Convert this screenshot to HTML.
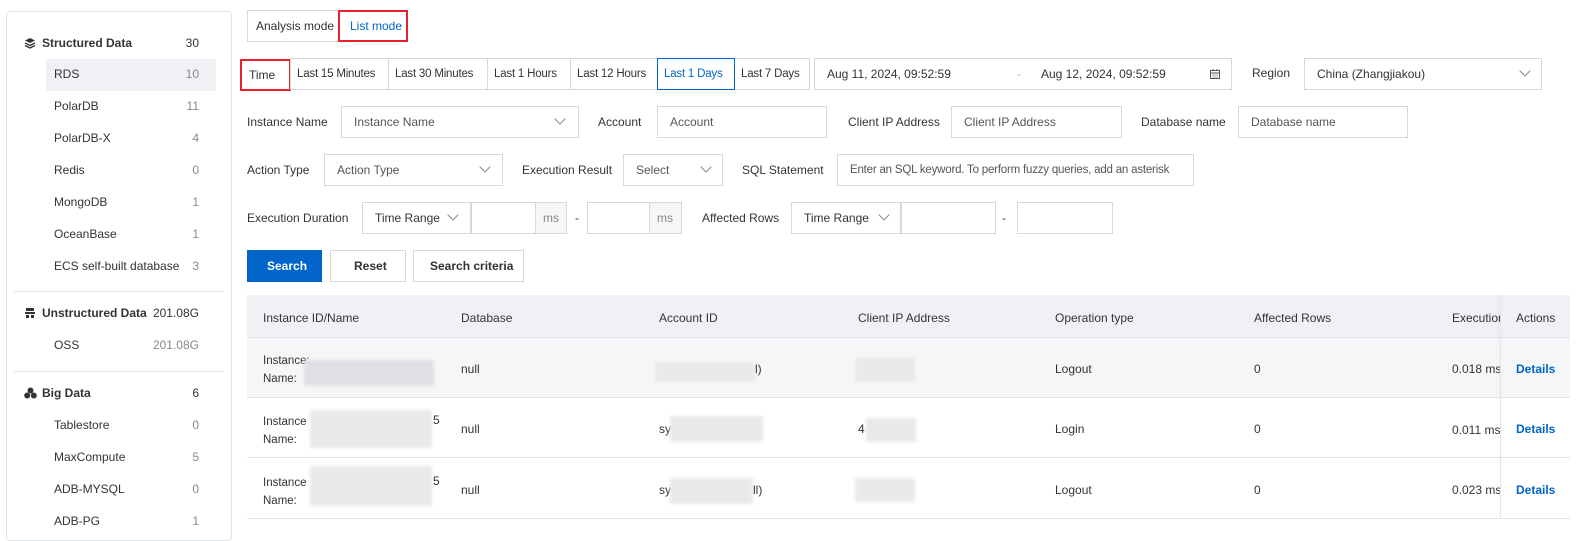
<!DOCTYPE html>
<html><head><meta charset="utf-8"><style>
*{box-sizing:border-box;margin:0;padding:0}
body{width:1582px;height:524px;overflow:hidden;background:#fff;font-family:"Liberation Sans",sans-serif;font-size:12px;color:#333;position:relative}
.a{position:absolute;white-space:nowrap}
.b{position:absolute;border:1px solid #d7d8d9;background:#fff;display:flex;align-items:center;padding-left:12px;white-space:nowrap;color:#333;overflow:hidden}
.t{font-size:11.5px;letter-spacing:-0.2px;padding-left:6px}
.ph{color:#555}
.c{position:absolute;width:8px;height:8px;border-right:1px solid #888;border-bottom:1px solid #888;transform:rotate(45deg)}
.blur{position:absolute;background:#e8e9eb;filter:blur(1.5px)}
.cnt{position:absolute;right:0;color:#888}
</style></head><body>
<!-- sidebar -->
<div class="a" style="left:6px;top:11px;width:226px;height:530px;border:1px solid #dfe3ea;border-radius:4px"></div>
<div class="a" style="left:46px;top:59px;width:170px;height:32px;background:#eff1f5"></div>
<div class="a" style="left:14px;top:291px;width:210px;border-top:1px solid #dfe3ea"></div>
<div class="a" style="left:14px;top:371px;width:210px;border-top:1px solid #dfe3ea"></div>
<svg class="a" style="left:24px;top:37px" width="12" height="12" viewBox="0 0 12 12"><path d="M6 1L11 3.5L6 6L1 3.5Z" fill="#333"/><path d="M1 6L6 8.5L11 6M1 8.5L6 11L11 8.5" stroke="#333" fill="none" stroke-width="1.3"/></svg>
<svg class="a" style="left:24px;top:307px" width="12" height="12" viewBox="0 0 12 12"><path d="M2 1h8v3H2zM1 5h10v2H1zM2 8h3v3H2zM7 8h3v3H7z" fill="#333"/></svg>
<svg class="a" style="left:24px;top:387px" width="13" height="12" viewBox="0 0 13 12"><circle cx="6.5" cy="3.5" r="3" fill="#333"/><circle cx="3.2" cy="8.5" r="3" fill="#333"/><circle cx="9.8" cy="8.5" r="3" fill="#333"/></svg>
<div class="a" style="left:42px;top:36px;width:157px;font-weight:bold">Structured Data<span class="cnt" style="color:#333;font-weight:normal">30</span></div>
<div class="a" style="left:54px;top:67px;width:145px">RDS<span class="cnt">10</span></div>
<div class="a" style="left:54px;top:99px;width:145px">PolarDB<span class="cnt">11</span></div>
<div class="a" style="left:54px;top:131px;width:145px">PolarDB-X<span class="cnt">4</span></div>
<div class="a" style="left:54px;top:163px;width:145px">Redis<span class="cnt">0</span></div>
<div class="a" style="left:54px;top:195px;width:145px">MongoDB<span class="cnt">1</span></div>
<div class="a" style="left:54px;top:227px;width:145px">OceanBase<span class="cnt">1</span></div>
<div class="a" style="left:54px;top:259px;width:145px">ECS self-built database<span class="cnt">3</span></div>
<div class="a" style="left:42px;top:306px;width:157px;font-weight:bold">Unstructured Data<span class="cnt" style="color:#333;font-weight:normal">201.08G</span></div>
<div class="a" style="left:54px;top:338px;width:145px">OSS<span class="cnt">201.08G</span></div>
<div class="a" style="left:42px;top:386px;width:157px;font-weight:bold">Big Data<span class="cnt" style="color:#333;font-weight:normal">6</span></div>
<div class="a" style="left:54px;top:418px;width:145px">Tablestore<span class="cnt">0</span></div>
<div class="a" style="left:54px;top:450px;width:145px">MaxCompute<span class="cnt">5</span></div>
<div class="a" style="left:54px;top:482px;width:145px">ADB-MYSQL<span class="cnt">0</span></div>
<div class="a" style="left:54px;top:514px;width:145px">ADB-PG<span class="cnt">1</span></div>

<!-- mode -->
<div class="b" style="left:247px;top:10px;width:92px;height:32px;padding-left:8px">Analysis mode</div>
<div class="b" style="left:338px;top:10px;width:70px;height:32px;padding-left:10px;color:#0064c8;border:2px solid #e8212a">List mode</div>

<!-- time row -->
<div class="b" style="left:240px;top:59px;width:51px;height:32px;padding-left:7px;border:2px solid #e8212a">Time</div>
<div class="b t" style="left:290px;top:58px;width:99px;height:32px">Last 15 Minutes</div>
<div class="b t" style="left:388px;top:58px;width:100px;height:32px">Last 30 Minutes</div>
<div class="b t" style="left:487px;top:58px;width:84px;height:32px">Last 1 Hours</div>
<div class="b t" style="left:570px;top:58px;width:88px;height:32px">Last 12 Hours</div>
<div class="b t" style="left:657px;top:58px;width:78px;height:32px;border-color:#0064c8;color:#0064c8;z-index:2">Last 1 Days</div>
<div class="b t" style="left:734px;top:58px;width:76px;height:32px">Last 7 Days</div>
<div class="b" style="left:814px;top:58px;width:418px;height:32px">Aug 11, 2024, 09:52:59<span class="a" style="left:202px;color:#bbb">-</span><span class="a" style="left:226px">Aug 12, 2024, 09:52:59</span>
<svg class="a" style="left:395px;top:10px" width="10" height="10" viewBox="0 0 10 10"><rect x="0.5" y="1.5" width="9" height="8" fill="none" stroke="#555"/><path d="M0.5 4h9M3 0v2M7 0v2M2.5 6h1M4.5 6h1M6.5 6h1M2.5 8h1M4.5 8h1M6.5 8h1" stroke="#555"/></svg></div>
<div class="a" style="left:1252px;top:66px">Region</div>
<div class="b" style="left:1304px;top:58px;width:238px;height:32px">China (Zhangjiakou)<span class="c" style="left:216px;top:8px"></span></div>

<!-- row 2 -->
<div class="a" style="left:247px;top:115px">Instance Name</div>
<div class="b ph" style="left:341px;top:106px;width:238px;height:32px">Instance Name<span class="c" style="left:214px;top:8px"></span></div>
<div class="a" style="left:598px;top:115px">Account</div>
<div class="b ph" style="left:657px;top:106px;width:170px;height:32px">Account</div>
<div class="a" style="left:848px;top:115px">Client IP Address</div>
<div class="b ph" style="left:951px;top:106px;width:171px;height:32px">Client IP Address</div>
<div class="a" style="left:1141px;top:115px">Database name</div>
<div class="b ph" style="left:1238px;top:106px;width:170px;height:32px">Database name</div>

<!-- row 3 -->
<div class="a" style="left:247px;top:163px">Action Type</div>
<div class="b ph" style="left:324px;top:154px;width:179px;height:32px">Action Type<span class="c" style="left:156px;top:8px"></span></div>
<div class="a" style="left:522px;top:163px">Execution Result</div>
<div class="b ph" style="left:623px;top:154px;width:100px;height:32px">Select<span class="c" style="left:78px;top:8px"></span></div>
<div class="a" style="left:742px;top:163px">SQL Statement</div>
<div class="b ph" style="left:837px;top:154px;width:357px;height:32px;font-size:11.5px;letter-spacing:-0.2px">Enter an SQL keyword. To perform fuzzy queries, add an asterisk</div>

<!-- row 4 -->
<div class="a" style="left:247px;top:211px">Execution Duration</div>
<div class="b" style="left:362px;top:202px;width:109px;height:32px">Time Range<span class="c" style="left:86px;top:8px"></span></div>
<div class="b" style="left:471px;top:202px;width:96px;height:32px"></div>
<div class="b" style="left:535px;top:202px;width:32px;height:32px;background:#f6f6f6;color:#888;padding-left:7px">ms</div>
<div class="a" style="left:575px;top:211px">-</div>
<div class="b" style="left:587px;top:202px;width:95px;height:32px"></div>
<div class="b" style="left:649px;top:202px;width:33px;height:32px;background:#f6f6f6;color:#888;padding-left:7px">ms</div>
<div class="a" style="left:702px;top:211px">Affected Rows</div>
<div class="b" style="left:791px;top:202px;width:110px;height:32px">Time Range<span class="c" style="left:88px;top:8px"></span></div>
<div class="b" style="left:901px;top:202px;width:95px;height:32px"></div>
<div class="a" style="left:1002px;top:211px">-</div>
<div class="b" style="left:1017px;top:202px;width:96px;height:32px"></div>

<!-- buttons -->
<div class="b" style="left:247px;top:250px;width:75px;height:32px;background:#0064c8;border-color:#0064c8;color:#fff;font-weight:bold;padding-left:19px">Search</div>
<div class="b" style="left:330px;top:250px;width:76px;height:32px;font-weight:bold;padding-left:23px">Reset</div>
<div class="b" style="left:413px;top:250px;width:111px;height:32px;font-weight:bold;padding-left:16px">Search criteria</div>

<!-- table -->
<div class="a" style="left:247px;top:295px;width:1323px;height:43px;background:#eff1f5;border-bottom:1px solid #e3e5e8"></div>
<div class="a" style="left:247px;top:338px;width:1323px;height:60px;background:#f5f6f8;border-bottom:1px solid #e3e5e8"></div>
<div class="a" style="left:247px;top:398px;width:1323px;height:60px;border-bottom:1px solid #e3e5e8"></div>
<div class="a" style="left:247px;top:458px;width:1323px;height:61px;border-bottom:1px solid #e3e5e8"></div>
<div class="a" style="left:1452px;top:295px;width:48px;height:224px;overflow:hidden">
<div class="a" style="left:0;top:16px">Execution Time</div>
<div class="a" style="left:0;top:67px">0.018 ms</div>
<div class="a" style="left:0;top:128px">0.011 ms</div>
<div class="a" style="left:0;top:188px">0.023 ms</div></div>
<div class="a" style="left:1500px;top:295px;width:1px;height:224px;background:#e3e5e8;box-shadow:-2px 0 4px rgba(0,0,0,0.08)"></div>
<div class="a" style="left:263px;top:311px">Instance ID/Name</div>
<div class="a" style="left:461px;top:311px">Database</div>
<div class="a" style="left:659px;top:311px">Account ID</div>
<div class="a" style="left:858px;top:311px">Client IP Address</div>
<div class="a" style="left:1055px;top:311px">Operation type</div>
<div class="a" style="left:1254px;top:311px">Affected Rows</div>
<div class="a" style="left:1516px;top:311px">Actions</div>

<div class="a" style="left:263px;top:352px;line-height:18px;font-size:11.5px">Instance:<br>Name:</div>
<div class="blur" style="left:304px;top:360px;width:130px;height:26px;background:#dfe0e3"></div>
<div class="a" style="left:461px;top:362px">null</div>
<div class="blur" style="left:655px;top:362px;width:100px;height:20px"></div><div class="a" style="left:755px;top:362px">l)</div>
<div class="blur" style="left:855px;top:358px;width:60px;height:24px"></div>
<div class="a" style="left:1055px;top:362px">Logout</div>
<div class="a" style="left:1254px;top:362px">0</div>
<div class="a" style="left:1516px;top:362px;color:#0064c8;font-weight:bold">Details</div>

<div class="a" style="left:263px;top:413px;line-height:18px;font-size:11.5px">Instance<br>Name:</div>
<div class="blur" style="left:310px;top:410px;width:122px;height:38px"></div><div class="a" style="left:433px;top:413px">5</div>
<div class="a" style="left:461px;top:422px">null</div>
<div class="a" style="left:659px;top:422px">sy</div><div class="blur" style="left:670px;top:416px;width:93px;height:26px"></div>
<div class="a" style="left:858px;top:422px">4</div><div class="blur" style="left:866px;top:418px;width:50px;height:24px"></div>
<div class="a" style="left:1055px;top:422px">Login</div>
<div class="a" style="left:1254px;top:422px">0</div>
<div class="a" style="left:1516px;top:422px;color:#0064c8;font-weight:bold">Details</div>

<div class="a" style="left:263px;top:474px;line-height:18px;font-size:11.5px">Instance<br>Name:</div>
<div class="blur" style="left:310px;top:466px;width:122px;height:40px"></div><div class="a" style="left:433px;top:474px">5</div>
<div class="a" style="left:461px;top:483px">null</div>
<div class="a" style="left:659px;top:483px">sy</div><div class="blur" style="left:670px;top:478px;width:83px;height:26px"></div><div class="a" style="left:753px;top:483px">ll)</div>
<div class="blur" style="left:855px;top:478px;width:60px;height:24px"></div>
<div class="a" style="left:1055px;top:483px">Logout</div>
<div class="a" style="left:1254px;top:483px">0</div>
<div class="a" style="left:1516px;top:483px;color:#0064c8;font-weight:bold">Details</div>
</body></html>
